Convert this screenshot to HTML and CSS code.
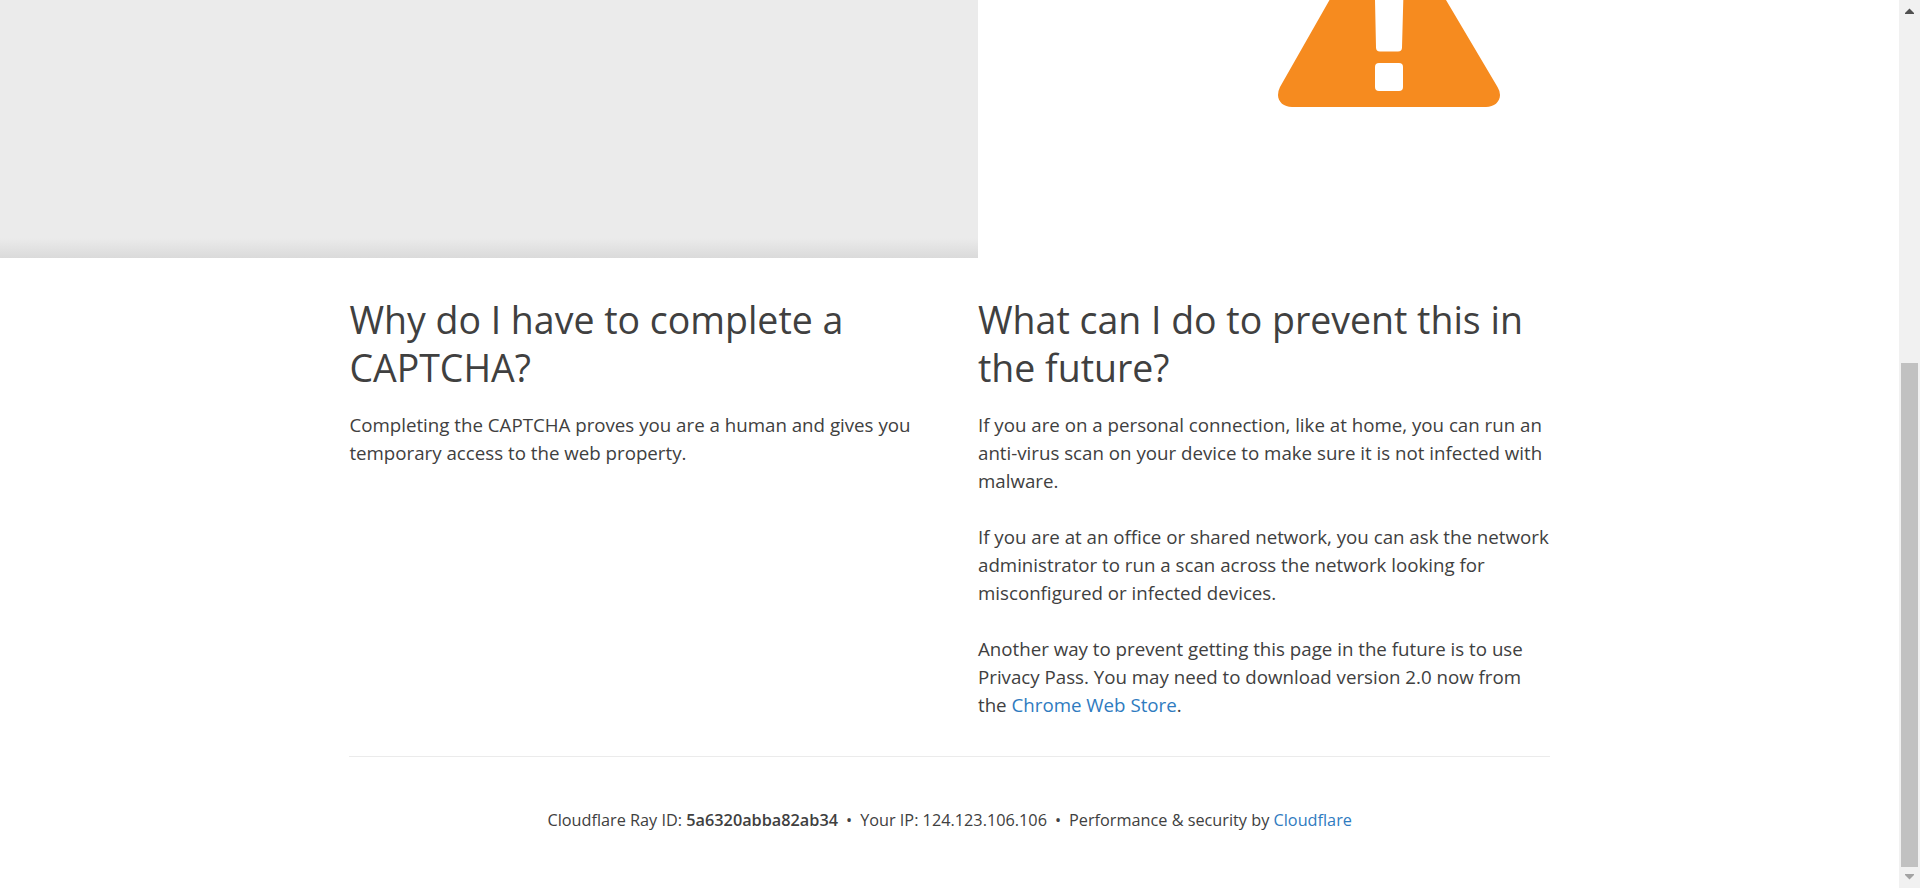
FILE: index.html
```html
<!DOCTYPE html>
<html lang="en">
<head>
<meta charset="utf-8">
<title>Attention Required! | Cloudflare</title>
<link rel="stylesheet" href="styles.css">
</head>
<body>
<div class="window">
  <main class="page">
    <section class="hero">
      <div class="captcha-panel"></div>
      <div class="warning">
        <svg class="warning-icon" width="222" height="107" viewBox="0 0 222 107">
          <path fill="#f68b1f" d="M51.500 0H168L219.500 87Q222 91 222 95C222 102 216 107 208 107H14C6 107 0 102 0 95Q0 91 2 87Z"/>
          <path fill="#fff" d="M97 0H125.300L124 47.500Q124 51.500 120 51.500H102Q98 51.500 98 47.500Z"/>
          <rect x="97" y="63" width="28" height="28" rx="4" fill="#fff"/>
        </svg>
      </div>
    </section>
    <div class="wrapper">
      <section class="columns">
        <div class="column">
          <h2>Why do I have to complete a CAPTCHA?</h2>
          <p>Completing the CAPTCHA proves you are a human and gives you temporary access to the web property.</p>
        </div>
        <div class="column">
          <h2>What can I do to prevent this in the future?</h2>
          <p>If you are on a personal connection, like at home, you can run an anti-virus scan on your device to make sure it is not infected with malware.</p>
          <p>If you are at an office or shared network, you can ask the network administrator to run a scan across the network looking for misconfigured or infected devices.</p>
          <p>Another way to prevent getting this page in the future is to use Privacy Pass. You may need to download version 2.0 now from the <a>Chrome Web Store</a>.</p>
        </div>
      </section>
      <footer class="footer">
        <span>Cloudflare Ray ID: <strong>5a6320abba82ab34</strong></span>
        <span class="dot">•</span>
        <span>Your IP: 124.123.106.106</span>
        <span class="dot">•</span>
        <span>Performance &amp; security by <a>Cloudflare</a></span>
      </footer>
    </div>
  </main>
  <div class="scrollbar">
    <svg class="arrow" width="21" height="21" viewBox="0 0 21 21"><path fill="#505050" d="M6 14V13L10.500 8.500L15 13V14Z"/></svg>
    <div class="thumb"></div>
    <svg class="arrow" width="21" height="21" viewBox="0 0 21 21"><path fill="#a3a3a3" d="M6 7V8L10.500 12.500L15 8V7Z"/></svg>
  </div>
</div>
</body>
</html>
```
FILE: styles.css
```css
* { box-sizing: border-box; }
body { margin: 0; background: #fff; color: #404040; font-family: "Open Sans", sans-serif; font-size: 18.72px; line-height: 28px; overflow: hidden; }
h2, p { margin: 0; font-weight: 400; }
a { color: #2f7bbf; }
strong { font-weight: 600; }
.window { display: flex; height: 888px; }
.page { flex: 1; }
.hero { display: flex; height: 258px; }
.captcha-panel { width: 978px; background: linear-gradient(#ebebeb 0, #ebebeb 238px, #dadada 258px); }
.warning { padding-left: 300px; }
.warning-icon { display: block; }
.wrapper { width: 1200.6px; margin-left: 349.4px; }
.columns { display: grid; grid-template-columns: 574.6px 574px; column-gap: 54px; padding-top: 38px; height: 499px; border-bottom: 1px solid #ebebeb; }
h2 { font-size: 37.47px; line-height: 48px; margin-bottom: 19px; }
p + p { margin-top: 28px; }
.footer { display: flex; justify-content: center; padding-top: 50px; font-size: 16.25px; line-height: 26px; }
.dot { margin: 0 8px; }
.scrollbar { width: 21px; background: #f1f1f1; display: flex; flex-direction: column; align-items: center; }
.arrow { display: block; }
.thumb { width: 17px; height: 504px; margin-top: auto; background: #c1c1c1; }
```
